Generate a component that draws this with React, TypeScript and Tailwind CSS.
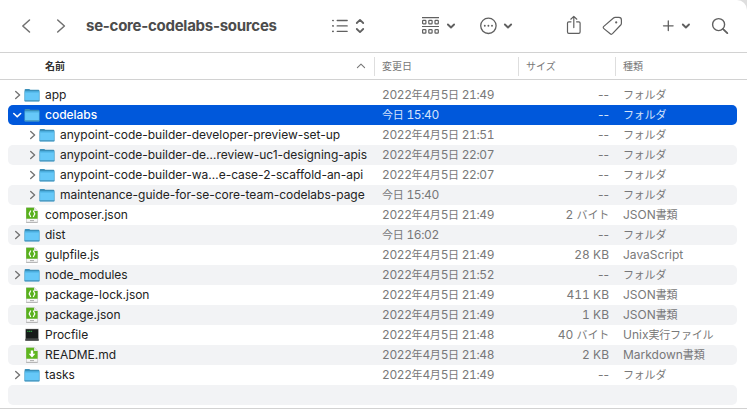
import React from "react";

type Kind = "folder" | "code" | "exec" | "md";
type Item = {
  name: string;
  icon: Kind;
  depth?: number;
  open?: boolean;
  date: string;
  size: string;
  kind: string;
};

const items: Item[] = [
  { name: "app", icon: "folder", date: "2022年4月5日 21:49", size: "--", kind: "フォルダ" },
  { name: "codelabs", icon: "folder", open: true, date: "今日 15:40", size: "--", kind: "フォルダ" },
  { name: "anypoint-code-builder-developer-preview-set-up", icon: "folder", depth: 1, date: "2022年4月5日 21:51", size: "--", kind: "フォルダ" },
  { name: "anypoint-code-builder-de…review-uc1-designing-apis", icon: "folder", depth: 1, date: "2022年4月5日 22:07", size: "--", kind: "フォルダ" },
  { name: "anypoint-code-builder-wa…e-case-2-scaffold-an-api", icon: "folder", depth: 1, date: "2022年4月5日 22:07", size: "--", kind: "フォルダ" },
  { name: "maintenance-guide-for-se-core-team-codelabs-page", icon: "folder", depth: 1, date: "今日 15:40", size: "--", kind: "フォルダ" },
  { name: "composer.json", icon: "code", date: "2022年4月5日 21:49", size: "2 バイト", kind: "JSON書類" },
  { name: "dist", icon: "folder", date: "今日 16:02", size: "--", kind: "フォルダ" },
  { name: "gulpfile.js", icon: "code", date: "2022年4月5日 21:49", size: "28 KB", kind: "JavaScript" },
  { name: "node_modules", icon: "folder", date: "2022年4月5日 21:52", size: "--", kind: "フォルダ" },
  { name: "package-lock.json", icon: "code", date: "2022年4月5日 21:49", size: "411 KB", kind: "JSON書類" },
  { name: "package.json", icon: "code", date: "2022年4月5日 21:49", size: "1 KB", kind: "JSON書類" },
  { name: "Procfile", icon: "exec", date: "2022年4月5日 21:48", size: "40 バイト", kind: "Unix実行ファイル" },
  { name: "README.md", icon: "md", date: "2022年4月5日 21:48", size: "2 KB", kind: "Markdown書類" },
  { name: "tasks", icon: "folder", date: "2022年4月5日 21:49", size: "--", kind: "フォルダ" },
];

// Japanese runs are set slightly smaller than the Latin text beside them.
function Mixed({ text }: { text: string }) {
  return (
    <>
      {text.split(/([\u3000-\u9fff]+)/).map((run, i) =>
        i % 2 ? (
          <span key={i} className="text-[11px] tracking-[-0.2px]">{run}</span>
        ) : (
          <React.Fragment key={i}>{run}</React.Fragment>
        ),
      )}
    </>
  );
}

function FolderIcon() {
  return (
    <svg className="block shrink-0" width="16" height="16" viewBox="0 0 16 16">
      <path d="M.6 2.9q0-1 1-1h3.6l1.2.8h8q1 0 1 1V14H.6z" fill="#3a8fb9" />
      <path d="M.6 4.3h14.8v9.6q0 .7-.8.7H1.4q-.8 0-.8-.7z" fill="#4ba6d2" />
      <path d="M1.1 5h13.8v8.6H1.1z" fill="#66c8f8" />
      <path d="M1.1 4.3h13.8v1.3H1.1z" fill="#4fb4e6" />
      <path d="M.8 13.8h14.4" stroke="#4590b5" strokeWidth=".9" />
    </svg>
  );
}

function DocIcon({ md }: { md: boolean }) {
  return (
    <svg className="block shrink-0" width="16" height="16" viewBox="0 0 16 16">
      <path d="M2.5.6h7.8l3.3 3.2v11.6H2.5z" fill="#f7f7f7" stroke="#bdbdbd" strokeWidth=".6" />
      <path d="M2.2.8h8v3.1h3.4v7.9H2.2z" fill={md ? "#5fb61f" : "#58b01c"} />
      <path d="M10.2.8l3.4 3.1h-3.4z" fill="#e3e6e0" />
      {md ? (
        <path d="M6.8 3.6h2.4v3.2h2.1L8 10.5 4.7 6.8h2.1z" fill="#fff" />
      ) : (
        <path d="M7.1 3.9C5.5 3.7 6.5 6.5 4.8 6.8c1.7.3.7 3.1 2.3 2.9M8.9 3.9c1.6-.2.6 2.6 2.3 2.9-1.7.3-.7 3.1-2.3 2.9" fill="none" stroke="#fff" strokeWidth="1.2" />
      )}
      <path d="M6 13.6h4" stroke="#999" strokeWidth=".8" />
      <path d="M2.2 15.4h11.4" stroke="#999" strokeWidth=".6" />
    </svg>
  );
}

function ExecIcon() {
  return (
    <svg className="block shrink-0" width="16" height="16" viewBox="0 0 16 16">
      <path d="M1.3 1.7h13.4v12.1H1.3z" fill="#b5b5b5" />
      <path d="M1.8 2.2h12.4v9.6H1.8z" fill="#171b1a" />
      <path d="M1.3 11.8h13.4v2H1.3z" fill="#444747" />
      <path d="M3.2 4.4h5" stroke="#2c9a40" strokeWidth="1.1" strokeDasharray="1.3 .5" />
    </svg>
  );
}

function Icon({ kind }: { kind: Kind }) {
  if (kind === "folder") return <FolderIcon />;
  if (kind === "exec") return <ExecIcon />;
  return <DocIcon md={kind === "md"} />;
}

function Chevron({ d, w, h, sw }: { d: string; w: number; h: number; sw: number }) {
  return (
    <svg className="block shrink-0" width={w} height={h} viewBox={`0 0 ${w} ${h}`} fill="none" stroke="currentColor" strokeWidth={sw} strokeLinecap="round" strokeLinejoin="round">
      <path d={d} />
    </svg>
  );
}

function Row({ item, striped }: { item: Item; striped: boolean }) {
  const tone = item.open ? "bg-[#0058db] text-[#d3e3fb]" : striped ? "bg-[#f2f3f5] text-[#777779]" : "text-[#797979]";
  return (
    <div className={`flex h-5 items-center rounded-[5px] ${tone}`}>
      <div className={`flex w-[374px] shrink-0 items-center ${item.depth ? "pl-[15px]" : ""}`}>
        <div className={`flex w-[17px] -mr-px shrink-0 justify-center ${item.open ? "text-white" : "text-[#747474]"}`}>
          {item.icon === "folder" &&
            (item.open ? <Chevron w={10} h={8} sw={1.6} d="M1.8 2.5 5.2 5.8 8.6 2.5" /> : <Chevron w={8} h={10} sw={1.4} d="M2.7 1.5 6.6 5 2.7 8.5" />)}
        </div>
        <Icon kind={item.icon} />
        <span className={`ml-[5px] whitespace-nowrap text-[12px] tracking-[-0.02px] ${item.open ? "font-medium text-white" : "text-[#222]"}`}>{item.name}</span>
      </div>
      <div className="w-[136px] shrink-0 whitespace-nowrap tabular-nums tracking-[-0.38px]"><Mixed text={item.date} /></div>
      <div className={`w-[91px] shrink-0 whitespace-nowrap text-right ${item.size === "--" ? "" : "tabular-nums"}`}><Mixed text={item.size} /></div>
      <div className="ml-3.5 whitespace-nowrap"><Mixed text={item.kind} /></div>
    </div>
  );
}

function Toolbar() {
  return (
    <header className="flex h-[53px] shrink-0 items-center border-b border-[#d2d2d2] text-[#606060]">
      <svg className="ml-5 block" width="48" height="18" viewBox="0 0 48 18" fill="none" stroke="#707070" strokeWidth="1.5" strokeLinecap="round" strokeLinejoin="round">
        <path d="M9.5 3 2.8 9l6.7 6" />
        <path d="M37.7 3l6.7 6-6.7 6" />
      </svg>
      <h1 className="ml-[18px] w-[246px] whitespace-nowrap text-[15px] font-bold tracking-[-0.26px] text-[#4c4c4c]">se-core-codelabs-sources</h1>
      <svg className="block" width="34" height="18" viewBox="0 0 34 18" fill="none" stroke="currentColor" strokeWidth="1.3" strokeLinecap="round" strokeLinejoin="round">
        <path d="M5.2 3.5h10M5.2 8.9h10M5.2 14.3h10" />
        <path d="M.8 3.5h.3M.8 8.9h.3M.8 14.3h.3" strokeWidth="1.7" />
        <path d="M24.8 6 28 2.9 31.2 6M24.8 12 28 15.1l3.2-3.1" strokeWidth="1.8" />
      </svg>
      <svg className="ml-[56px] block" width="36" height="18" viewBox="0 0 36 18" fill="none" stroke="currentColor" strokeWidth="1.2">
        <path d="M0 .6h17M0 9.5h17" />
        <rect x=".6" y="3.3" width="3.3" height="3.6" rx=".7" />
        <rect x="6.8" y="3.3" width="3.3" height="3.6" rx=".7" />
        <rect x="13" y="3.3" width="3.3" height="3.6" rx=".7" />
        <rect x=".6" y="12.6" width="3.3" height="3.6" rx=".7" />
        <rect x="6.8" y="12.6" width="3.3" height="3.6" rx=".7" />
        <rect x="13" y="12.6" width="3.3" height="3.6" rx=".7" />
        <path d="M25.9 7.5l3.1 3 3.1-3" strokeWidth="1.9" strokeLinecap="round" strokeLinejoin="round" />
      </svg>
      <svg className="ml-[20px] block" width="38" height="18" viewBox="0 0 38 18" fill="none" stroke="currentColor">
        <circle cx="10.4" cy="8.8" r="7.7" strokeWidth="1.3" />
        <path d="M6.8 8.8h.01M10.4 8.8h.01M14 8.8h.01" strokeWidth="1.9" strokeLinecap="round" />
        <path d="M26.9 7.5l3.1 3 3.1-3" strokeWidth="1.9" strokeLinecap="round" strokeLinejoin="round" />
      </svg>
      <svg className="ml-[50px] block" width="16" height="22" viewBox="0 0 16 22" fill="none" stroke="currentColor" strokeWidth="1.2" strokeLinecap="round" strokeLinejoin="round">
        <path d="M5 6.8H2.8q-1.3 0-1.3 1.3v9q0 1.3 1.3 1.3h10q1.3 0 1.3-1.3v-9q0-1.3-1.3-1.3h-2.2M7.8 12.6V1.6M4.8 4.2 7.8 1.4l3 2.8" />
      </svg>
      <svg className="ml-5 block" width="22" height="22" viewBox="0 0 22 22" fill="none" stroke="currentColor" strokeWidth="1.2" strokeLinejoin="round">
        <path d="M1.8 11.4 11.2 3.2q.9-.8 2.1-.8h3.6q2.5 0 2.5 2.5v3.3q0 1-.7 1.8l-8.2 8.7q-1.1 1.1-2.3.1l-6.3-5.2q-1.3-1.1-.1-2.2z" />
        <circle cx="14.2" cy="7.4" r="1.1" fill="currentColor" stroke="none" />
      </svg>
      <svg className="ml-[38px] block" width="30" height="18" viewBox="0 0 30 18" fill="none" stroke="currentColor" strokeWidth="1.3" strokeLinecap="round">
        <path d="M1.5 8.8h9.6M6.3 4v9.6" />
        <path d="M20.8 7.5l3.1 3 3.1-3" strokeWidth="1.9" strokeLinejoin="round" />
      </svg>
      <svg className="ml-[19px] block" width="18" height="18" viewBox="0 0 18 18" fill="none" stroke="currentColor" strokeLinecap="round">
        <circle cx="7.6" cy="7.6" r="6" strokeWidth="1.4" />
        <path d="M12.1 12.1l4.2 4" strokeWidth="1.9" />
      </svg>
    </header>
  );
}

export default function App() {
  return (
    <div className="h-[414px] w-[747px] overflow-hidden bg-[#dedede] font-['Inter','Noto_Sans_CJK_JP',sans-serif] text-[12px] leading-5">
      <main className="flex h-full flex-col overflow-hidden rounded-tr-[10px] bg-white">
        <Toolbar />
        <div className="flex h-[27px] shrink-0 items-center border-b border-[#d2d2d2] text-[10px] leading-4 text-[#777]">
          <div className="flex w-[374px] items-center justify-between pl-[45px] pr-2">
            <span className="font-bold text-[#303030]">名前</span>
            <Chevron w={10} h={8} sw={1.1} d="M1.4 5.7 5 2.2l3.6 3.5" />
          </div>
          <div className="flex h-[19px] w-36 items-center border-l border-[#dedede] pl-[7px]">変更日</div>
          <div className="flex h-[19px] w-[97px] items-center border-l border-[#dedede] pl-[7px]">サイズ</div>
          <div className="flex h-[19px] items-center border-l border-[#dedede] pl-[7px]">種類</div>
        </div>
        <div className="ml-2 mt-[5px] w-[729px] shrink-0">
          {items.map((item, i) => (
            <Row key={item.name} item={item} striped={i % 2 === 1} />
          ))}
          <div className="h-5 rounded-[5px] bg-[#f2f3f5]" />
        </div>
        <div className="mt-[3px] h-px shrink-0 bg-[#d2d2d2]" />
      </main>
    </div>
  );
}
